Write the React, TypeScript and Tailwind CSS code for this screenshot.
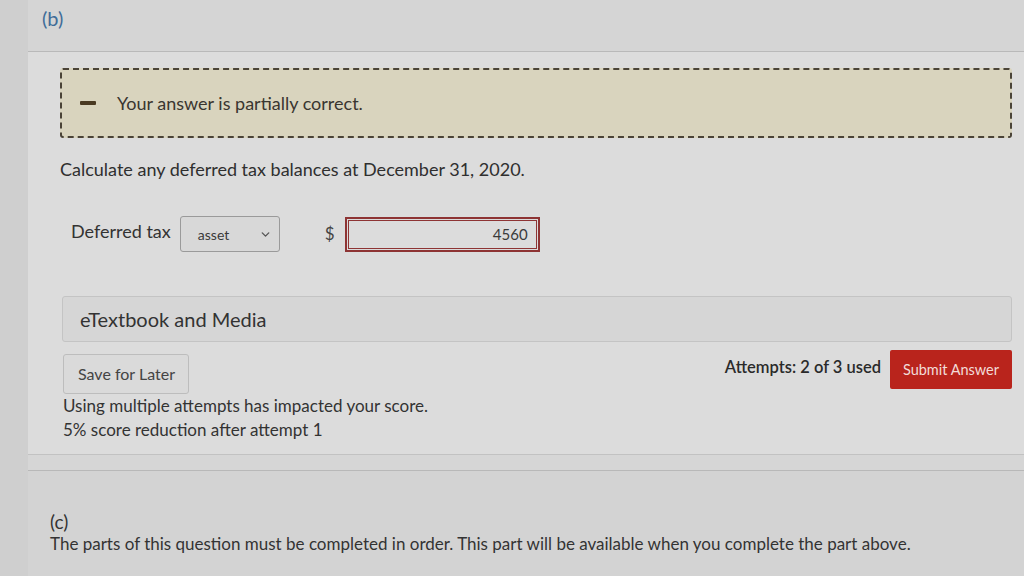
import { ChevronDown } from 'lucide-react';

const App = () => {
  return (
    <div className="w-[1024px] h-[576px] overflow-hidden bg-[#cfcfcf] font-['Lato','Liberation_Sans',sans-serif] text-[#2f2f2f]">
      <div className="ml-[28px] h-full flex flex-col">
        {/* Part (b) header */}
        <div className="h-[52px] bg-[#d5d5d5] border-b border-[#b9b9b9] pl-[14px] pt-[3px]">
          <span className="text-[20px] text-[#3f6d99]">(b)</span>
        </div>

        {/* Part (b) body */}
        <div className="bg-[#dcdcdc] border-b border-[#c2c2c2] pl-[32px] pr-[12px] pt-[16px] pb-[12px]">
          {/* Feedback banner */}
          <div className="h-[70px] bg-[#d9d4be] border-2 border-dashed border-[#4a4337] rounded-[3px] flex items-center pl-[18px]">
            <span className="w-[16px] h-[4px] bg-[#4a3a22] rounded-[1px]" />
            <span className="ml-[21px] text-[18px] text-[#3a3630]">Your answer is partially correct.</span>
          </div>

          <p className="mt-[18px] text-[18px] text-[#2f2f2f]">
            Calculate any deferred tax balances at December 31, 2020.
          </p>

          {/* Answer row */}
          <div className="mt-[33px] flex items-center pl-[11px]">
            <span className="text-[18px] text-[#333] -mt-[6px]">Deferred tax</span>
            <div className="ml-[9px] w-[100px] h-[36px] bg-[#d8d8d8] border border-[#9a9a9a] rounded-[3px] flex items-center justify-between pl-[17px] pr-[7px]">
              <span className="text-[14px] text-[#3a3a3a]">asset</span>
              <ChevronDown className="w-[13px] h-[13px] text-[#555]" strokeWidth={2.5} />
            </div>
            <span className="ml-[45px] text-[17px] text-[#444]">$</span>
            <div className="ml-[10px] w-[195px] h-[35px] border-2 border-[#8e3434] p-[1px]">
              <div className="h-full border border-[#8e3434] bg-[#dcdcdc] flex items-center justify-end pr-[8px]">
                <span className="text-[15px] text-[#3a3a3a]">4560</span>
              </div>
            </div>
          </div>

          {/* eTextbook bar */}
          <div className="mt-[44px] ml-[2px] h-[46px] bg-[#d6d6d6] border border-[#c4c4c4] rounded-[3px] flex items-center pl-[17px]">
            <span className="text-[20px] text-[#333]">eTextbook and Media</span>
          </div>

          {/* Actions */}
          <div className="mt-[8px] ml-[3px] flex items-start justify-between">
            <div>
              <div className="mt-[4px] w-[126px] h-[40px] bg-[#dadada] border border-[#bdbdbd] rounded-[3px] flex items-center pl-[14px]">
                <span className="text-[16px] text-[#444]">Save for Later</span>
              </div>
              <p className="mt-[0px] text-[17px] leading-[24px] text-[#333]">
                Using multiple attempts has impacted your score.
                <br />
                5% score reduction after attempt 1
              </p>
            </div>
            <div className="flex items-center">
              <span className="text-[16.5px] font-semibold text-[#2a2a2a] -mt-[4px]">Attempts: 2 of 3 used</span>
              <div className="ml-[9px] w-[122px] h-[39px] bg-[#b9241c] rounded-[2px] flex items-center justify-center">
                <span className="text-[14.5px] text-[#f2dcd8]">Submit Answer</span>
              </div>
            </div>
          </div>
        </div>

        {/* Gap */}
        <div className="h-[16px] bg-[#d6d6d6] border-b border-[#b8b8b8]" />

        {/* Part (c) */}
        <div className="flex-1 bg-[#d3d3d3] pl-[22px] pt-[37px]">
          <div className="text-[19px] text-[#333]">(c)</div>
          <p className="-mt-[6px] text-[17px] text-[#333]">
            The parts of this question must be completed in order. This part will be available when you complete the part above.
          </p>
        </div>
      </div>
    </div>
  );
};

export default App;
